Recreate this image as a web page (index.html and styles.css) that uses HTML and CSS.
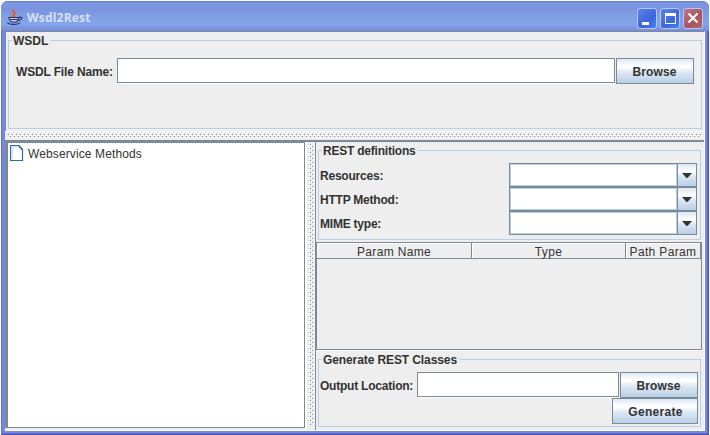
FILE: index.html
```html
<!DOCTYPE html>
<html lang="en">
<head>
<meta charset="utf-8">
<title>Wsdl2Rest</title>
<link rel="stylesheet" href="styles.css">
</head>
<body>
<div class="window">
  <header class="titlebar">
    <svg class="java" width="16" height="17" viewBox="0 0 16 17" fill="none">
      <path d="M6 8C2 5 8 4 6.500 0.500M8 8C6 6 7.500 5 9 3.500" stroke="#d9562f" stroke-width="1.600"/>
      <path d="M5 7.500C3.500 6 5 5 6 4" stroke="#f7c3a0" stroke-width=".7"/>
      <path d="M2 8.500h9.500c0 2-.5 3.500-2 4.500h-5C3 12 2 10.500 2 8.500z" fill="#c6d2f2" stroke="#25305f" stroke-width="1.200"/>
      <path d="M11.500 8.500c4.500-1.500 4.500 2.500-1 3M.5 13.500c1 2.500 11 2.500 12.500 0M3.500 10.500h7" stroke="#25305f" stroke-width="1.200"/>
    </svg>
    <h1 class="title">Wsdl2Rest</h1>
    <div class="controls">
      <button class="ctl"><svg width="18" height="18"><path d="M4 13h7v3H4z" fill="#fff"/></svg></button>
      <button class="ctl"><svg width="18" height="18"><path d="M4.500 4.500h10v10h-10z" fill="none" stroke="#fff"/><path d="M4 4h11v3H4z" fill="#fff"/></svg></button>
      <button class="ctl close"><svg width="18" height="18"><path d="M4.500 4.500l9 9M13.500 4.500l-9 9" stroke="#fff" stroke-width="2.200"/></svg></button>
    </div>
  </header>
  <main class="content">
    <section class="top">
      <fieldset class="group wsdl">
        <legend>WSDL</legend>
        <div class="row">
          <label class="file-label">WSDL File Name:</label>
          <div class="field"></div>
          <button class="btn">Browse</button>
        </div>
      </fieldset>
    </section>
    <div class="split-h"><svg width="694" height="4"><defs><pattern id="dots" width="4" height="4" patternUnits="userSpaceOnUse"><path d="M0 0h1v1H0zM2 2h1v1H2z" fill="#7a8a99"/><path d="M1 1h1v1H1zM3 3h1v1H3z" fill="#fff"/></pattern></defs><rect width="694" height="4" fill="url(#dots)"/></svg></div>
    <div class="bottom">
      <section class="tree">
        <div class="node">
          <svg width="14" height="16"><path d="M.5.500h8l4 4v11H.5z" fill="#fff" stroke="#3168a5" stroke-width="1.200"/><path d="M2 14V2h5.500" stroke="#b8cfe5" fill="none"/><path d="M7.500 0.500l5 5.500V4l-3-3.500z" fill="#3168a5"/></svg>
          <span>Webservice Methods</span>
        </div>
      </section>
      <div class="split-v"><svg width="4" height="282"><rect width="4" height="282" fill="url(#dots)"/></svg></div>
      <section class="right">
        <fieldset class="group rest">
          <legend>REST definitions</legend>
          <div class="row"><label>Resources:</label><div class="combo"><i></i><b><svg width="10" height="5"><path d="M0 0h10L5.500 5h-1z" fill="#333"/></svg></b></div></div>
          <div class="row"><label>HTTP Method:</label><div class="combo"><i></i><b><svg width="10" height="5"><path d="M0 0h10L5.500 5h-1z" fill="#333"/></svg></b></div></div>
          <div class="row"><label>MIME type:</label><div class="combo"><i></i><b><svg width="10" height="5"><path d="M0 0h10L5.500 5h-1z" fill="#333"/></svg></b></div></div>
        </fieldset>
        <div class="table">
          <div class="thead"><span>Param Name</span><span>Type</span><span>Path Param</span></div>
        </div>
        <fieldset class="group gen">
          <legend>Generate REST Classes</legend>
          <div class="row"><label class="out-label">Output Location:</label><div class="field"></div><button class="btn">Browse</button></div>
          <div class="row end"><button class="btn wide">Generate</button></div>
        </fieldset>
      </section>
    </div>
  </main>
</div>
</body>
</html>
```

FILE: styles.css
```css
* { box-sizing: border-box; }
body { margin: 0; width: 710px; height: 435px; overflow: hidden; background: #fff; padding: 1px 1px 0; color: #333; font: 12px/15px "Liberation Sans", Arial, sans-serif; }
button { font: inherit; color: inherit; padding: 0; margin: 0; }
svg { display: block; }
.window { width: 708px; height: 434px; padding: 0 4px 4px; border-radius: 7px 7px 0 0; background: #7588df; box-shadow: inset 1px 0 #6070cc, inset -1px -1px #4a50b4, inset -2px -2px #626fd0; }
.titlebar { display: flex; align-items: center; height: 30px; margin: 0 -4px; padding: 4px 6px 0; border-radius: 7px 7px 0 0; background: linear-gradient(#6078cf 0, #7b97e2 2px, #7b94df 8px, #809fe6 16px, #83a5ea 23px, #7b96e0 27px, #788ddd 30px); }
.java { margin-top: -2px; }
.title { margin: 0 auto 0 4px; color: #d5e0fa; font: bold 12px/16px "Open Sans", sans-serif; letter-spacing: 0.2px; }
.controls { display: flex; gap: 3px; }
.ctl { width: 20px; height: 21px; border: 1px solid #b7c7f3; border-radius: 3px; background: linear-gradient(135deg, #5f82e6, #3b66de 60%, #4781ef); }
.ctl.close { background: linear-gradient(135deg, #bd7488, #a8545f 60%, #b4686f); }
.content { height: 400px; background: #eee; border-top: 1px solid #7a8a99; border-right: 1px solid #fff; border-bottom: 1px solid #fff; }
.top { height: 99px; border-left: 1px solid #7a8a99; padding: 1px 0 0 2px; }
.group { margin: 0; min-width: 0; padding: 0 2px; border: 1px solid #b8cfe5; font-weight: bold; letter-spacing: -0.22px; }
.group legend { height: 15px; margin: 0; padding: 0 2px 0 1px; line-height: 17px; white-space: nowrap; }
.wsdl { width: 694px; height: 96px; padding: 10px 7px 0; }
.wsdl legend { margin-left: -4px; letter-spacing: 0; }
.row { display: flex; align-items: flex-start; height: 26px; }
.row label { white-space: nowrap; line-height: 28px; }
.file-label { width: 101px; letter-spacing: -0.15px; }
.field { flex: none; width: 498px; height: 25px; margin-right: 1px; background: #fff; border: 1px solid #7a8a99; box-shadow: 0 1px #fff; }
.btn { flex: none; width: 78px; height: 26px; padding: 2px 1px 0 0; border: 1px solid #7a8a99; background: linear-gradient(#dde8f3 0, #fff 30%, #fff 33%, #dde8f3 55%, #b8cfe5 100%); font-weight: bold; letter-spacing: 0.1px; }
.split-h { height: 9px; border-top: 1px solid #fff; padding: 2px 0 0 3px; }
.bottom { display: flex; height: 290px; border-top: 2px solid #7a8a99; }
.tree { width: 300px; height: 286px; background: #fff; border: solid #7a8a99; border-width: 1px 1px 1px 3px; padding: 2px; letter-spacing: 0.12px; }
.node { display: flex; align-items: flex-start; gap: 4px; line-height: 18px; }
.split-v { width: 10px; border-left: 2px solid #fff; padding: 2px 0 0 3px; }
.right { width: 388px; border-left: 1px solid #7a8a99; padding: 1px 0 0; }
.rest, .gen { width: 383px; margin-left: 2px; }
.rest { height: 97px; padding: 5px 1px 0; }
.rest .row { height: 24px; justify-content: space-between; padding-right: 2px; }
.rest .row label { line-height: 26px; }
.rest legend, .gen legend { margin-left: 2px; }
.combo { display: flex; width: 188px; height: 24px; border: 1px solid #7a8a99; }
.combo i { flex: 1; background: #fff; border: 1px solid #b8cfe5; }
.combo b { display: flex; align-items: center; justify-content: center; width: 19px; border-left: 1px solid #7a8a99; background: linear-gradient(#dde8f3, #fff 33%, #dde8f3 55%, #b8cfe5); }
.table { width: 386px; height: 108px; margin-top: 2px; border: 1px solid #7a8a99; box-shadow: 0 1px #fff; }
.thead { display: grid; grid-template: 16px / 155px 154px 75px; line-height: 18px; text-align: center; letter-spacing: 0.35px; }
.thead span { border: solid #7a8a99; border-width: 0 1px 1px 0; box-shadow: inset 1px 1px #fff; }
.gen { height: 75px; margin-top: 2px; padding: 5px 1px 0; }
.gen legend { letter-spacing: -0.1px; }
.gen .field { width: 202px; }
.out-label { width: 97px; }
.end { justify-content: flex-end; padding-right: 1px; }
.btn.wide { width: 86px; padding-left: 2px; letter-spacing: 0.3px; }
```
